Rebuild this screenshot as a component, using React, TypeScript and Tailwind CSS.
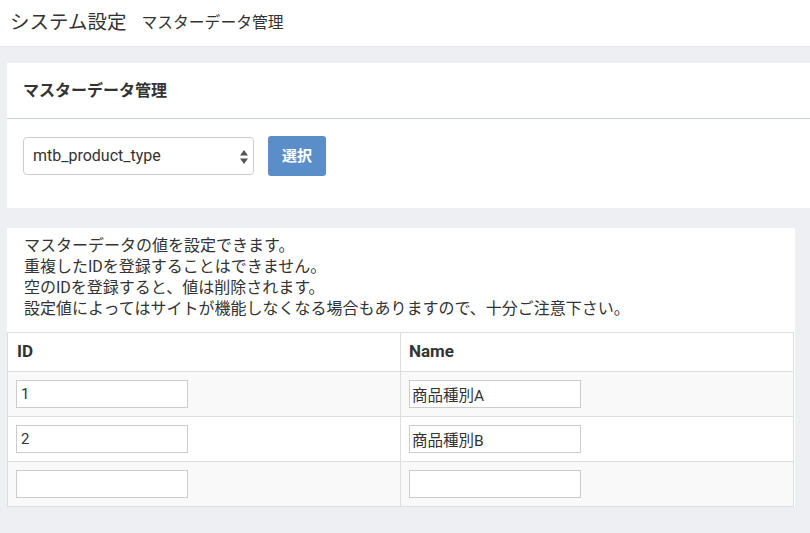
import React from 'react';

const rows = [
  { id: '1', name: '商品種別A' },
  { id: '2', name: '商品種別B' },
  { id: '', name: '' },
];

export default function App() {
  return (
    <div
      className="min-h-[533px] bg-[#eeeff3] text-[#333]"
      style={{ fontFamily: 'Roboto, "Noto Sans CJK JP", sans-serif' }}
    >
      {/* page header */}
      <div className="h-[47px] bg-white border-b border-[#e4e6ea] flex items-center px-[10px]">
        <h1 className="text-[19.5px] text-[#333] leading-none">システム設定</h1>
        <span className="ml-[15px] text-[15.8px] leading-none">マスターデータ管理</span>
      </div>

      <div className="pt-[16px] pl-[7px]">
        {/* select card */}
        <div className="bg-white">
          <div className="h-[56px] flex items-center px-[16px] border-b border-[#ccd3d6]">
            <h2 className="text-[16px] font-bold">マスターデータ管理</h2>
          </div>
          <div className="px-[16px] pt-[17px] pb-[32px] flex items-center gap-[14px]">
            <div className="relative w-[231px] h-[38px] border border-[#ccc] rounded-[4px] flex items-center pl-[9px]">
              <span className="text-[16px]">mtb_product_type</span>
              <svg className="absolute right-[5px] top-[12px]" width="8" height="14" viewBox="0 0 8 14">
                <path d="M4 0 L8 5.5 L0 5.5 Z" fill="#555" />
                <path d="M4 14 L8 8.5 L0 8.5 Z" fill="#555" />
              </svg>
            </div>
            <button className="h-[40px] w-[58px] bg-[#5a8ec9] rounded-[3px] text-white text-[15px] font-bold">
              選択
            </button>
          </div>
        </div>

        {/* master data card */}
        <div className="bg-white mt-[20px] mr-[15px]">
          <div className="px-[17px] pt-[7px] pb-[13px] text-[16px] leading-[21px]">
            <p>マスターデータの値を設定できます。</p>
            <p>重複したIDを登録することはできません。</p>
            <p>空のIDを登録すると、値は削除されます。</p>
            <p>設定値によってはサイトが機能しなくなる場合もありますので、十分ご注意下さい。</p>
          </div>
          <table className="w-[787px] border-collapse border border-[#ddd] text-[15px]">
            <thead>
              <tr className="h-[39px]">
                <th className="w-[393px] border border-[#ddd] text-left text-[17px] font-bold pl-[9px]">ID</th>
                <th className="border border-[#ddd] text-left text-[17px] font-bold pl-[8px]">Name</th>
              </tr>
            </thead>
            <tbody>
              {rows.map((r, i) => (
                <tr key={i} className={`h-[45px] ${i % 2 === 0 ? 'bg-[#f9f9f9]' : 'bg-white'}`}>
                  <td className="border border-[#ddd] pl-[8px]">
                    <input
                      defaultValue={r.id}
                      className="w-[172px] h-[28px] border border-[#ccc] bg-white px-[4px] text-[15px] outline-none align-middle"
                    />
                  </td>
                  <td className="border border-[#ddd] pl-[8px]">
                    <input
                      defaultValue={r.name}
                      className="w-[172px] h-[28px] border border-[#ccc] bg-white px-[2px] text-[15.5px] outline-none align-middle"
                    />
                  </td>
                </tr>
              ))}
            </tbody>
          </table>
        </div>
      </div>
    </div>
  );
}
